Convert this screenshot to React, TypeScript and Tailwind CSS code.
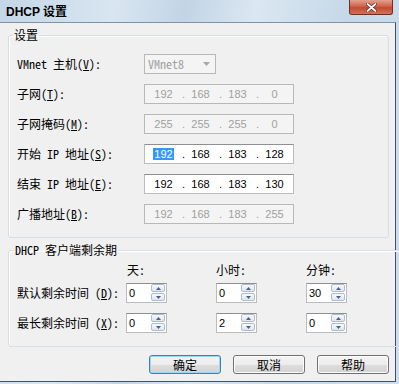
import React from 'react';

type IpProps = { parts: string[]; disabled?: boolean; selectFirst?: boolean };

function IpBox({ parts, disabled, selectFirst }: IpProps) {
  return (
    <div
      className={`flex h-[20px] w-[150px] items-center border font-['Liberation_Sans',sans-serif] text-[11px] leading-[14px] ${
        disabled
          ? 'border-[#b8b8b8] bg-[#f4f4f4] text-[#a0a0a0]'
          : 'border-[#b9bdc2] border-t-[#8e8f94] bg-white text-black'
      }`}
    >
      {parts.map((p, i) => (
        <div key={i} className="grid w-[37px] grid-cols-[5px_1fr_5px] items-center">
          <span className="text-left">{i > 0 ? '.' : ''}</span>
          <span className="text-center">
            {selectFirst && i === 0 ? (
              <span className="bg-[#3399ff] px-[1px] text-white">{p}</span>
            ) : (
              p
            )}
          </span>
          <span />
        </div>
      ))}
    </div>
  );
}

function Combo() {
  return (
    <div className="flex h-[20px] w-[72px] items-center border border-[#b8b8b8] bg-[#f4f4f4]">
      <span className="flex-1 pl-[3px] text-[12px] leading-[14px] text-[#a0a0a0]">VMnet8</span>
      <div className="flex h-full w-[17px] items-center justify-center">
        <svg width="7" height="4" viewBox="0 0 7 4">
          <path d="M0 0h7L3.5 4z" fill="#a8a8a8" />
        </svg>
      </div>
    </div>
  );
}

function SpinBtn({ up }: { up?: boolean }) {
  return (
    <div className="flex h-[8px] w-[14px] items-center justify-center rounded-[2px] border border-[#aebccc] bg-[linear-gradient(#f7f9fb,#dfe6ee)]">
      <svg width="5" height="3" viewBox="0 0 5 3">
        <path d={up ? 'M0 3h5L2.5 0z' : 'M0 0h5L2.5 3z'} fill="#4a6186" />
      </svg>
    </div>
  );
}

function Spin({ value }: { value: string }) {
  return (
    <div className="flex h-[20px] w-[41px] items-start border border-[#b9bdc2] border-t-[#8e8f94] bg-white">
      <span className="flex-1 self-center pl-[2px] font-['Liberation_Sans',sans-serif] text-[11px] leading-[14px]">
        {value}
      </span>
      <div className="mr-[1px] flex flex-col gap-[1px]">
        <SpinBtn up />
        <SpinBtn />
      </div>
    </div>
  );
}

function Key({ k }: { k: string }) {
  return (
    <>
      (<span className="underline underline-offset-1">{k}</span>):
    </>
  );
}

const ipRows = [
  { label: <>子网<Key k="T" /></>, parts: ['192', '168', '183', '0'], disabled: true },
  { label: <>子网掩码<Key k="M" /></>, parts: ['255', '255', '255', '0'], disabled: true },
  { label: <>开始 IP 地址<Key k="S" /></>, parts: ['192', '168', '183', '128'], selectFirst: true },
  { label: <>结束 IP 地址<Key k="E" /></>, parts: ['192', '168', '183', '130'] },
  { label: <>广播地址<Key k="B" /></>, parts: ['192', '168', '183', '255'], disabled: true },
];

const leaseRows = [
  { label: <>默认剩余时间 <Key k="D" /></>, values: ['0', '0', '30'] },
  { label: <>最长剩余时间 <Key k="X" /></>, values: ['0', '2', '0'] },
];

export default function App() {
  return (
    <div className="h-[384px] w-[399px] overflow-hidden bg-[linear-gradient(100deg,#c4d6e7_0%,#d9e6f1_25%,#c2d4e5_40%,#dbe7f1_55%,#c6d8e8_75%,#cfdeec_100%)] font-['Noto_Sans_Mono_CJK_SC','Liberation_Mono','Noto_Sans_CJK_SC',monospace] text-[12px] text-black">
      {/* title bar */}
      <div className="flex h-[22px] items-start justify-between pr-[6px]">
        <span className="pl-[6px] pt-[4px] font-['Liberation_Sans','Noto_Sans_CJK_SC',sans-serif] text-[12px] leading-[16px] font-bold">
          DHCP 设置
        </span>
        <div className="flex h-[15px] w-[44px] items-center justify-center rounded-b-[3px] border border-t-0 border-[#6f3024] bg-[linear-gradient(#e3a08f,#d0634a_45%,#c24a30_55%,#d2735a)]">
          <svg width="11" height="9" viewBox="0 0 11 9">
            <path d="M1.5 1l8 7M9.5 1l-8 7" stroke="#5a2418" strokeWidth="3.2" strokeLinecap="round" />
            <path d="M1.5 1l8 7M9.5 1l-8 7" stroke="#ffffff" strokeWidth="1.8" strokeLinecap="round" />
          </svg>
        </div>
      </div>

      {/* client area */}
      <div className="flex h-[360px] w-[396px] flex-col border-t border-r border-b border-t-[#7f93a8] border-r-[#3f5368] border-b-[#3f5368] bg-[#f0f0f0]">
        <fieldset className="mt-[4px] ml-[8px] w-[381px] rounded-[3px] border border-[#d5dfe5] px-[8px] pt-[11px] pb-[13px] shadow-[inset_1px_1px_0_#ffffff]">
          <legend className="-ml-[4px] px-[1px] leading-[16px]">设置</legend>
          <div className="flex flex-col gap-[10px]">
            <div className="flex items-center">
              <span className="w-[127px] leading-[16px]">
                VMnet 主机<Key k="V" />
              </span>
              <Combo />
            </div>
            {ipRows.map((r, i) => (
              <div key={i} className="flex items-center">
                <span className="w-[127px] leading-[16px]">{r.label}</span>
                <IpBox parts={r.parts} disabled={r.disabled} selectFirst={r.selectFirst} />
              </div>
            ))}
          </div>
        </fieldset>

        <fieldset className="mt-[4px] ml-[8px] w-[381px] rounded-[3px] border border-[#d5dfe5] px-[8px] pt-[4px] pb-[13px] shadow-[inset_1px_1px_0_#ffffff]">
          <legend className="-ml-[3px] px-[1px] leading-[16px]">DHCP 客户端剩余期</legend>
          <div className="grid grid-cols-[109px_90px_90px_90px] leading-[16px]">
            <span />
            <span className="pl-[1px]">天:</span>
            <span>小时:</span>
            <span>分钟:</span>
          </div>
          <div className="mt-[5px] flex flex-col gap-[10px]">
            {leaseRows.map((r, i) => (
              <div key={i} className="grid grid-cols-[109px_90px_90px_90px] items-center">
                <span className="leading-[16px]">{r.label}</span>
                {r.values.map((v, j) => (
                  <Spin key={j} value={v} />
                ))}
              </div>
            ))}
          </div>
        </fieldset>

        <div className="mt-[8px] flex justify-end gap-[12px] pr-[6px] font-['Noto_Sans_CJK_SC',sans-serif]">
          <button className="h-[19px] w-[72px] rounded-[3px] border border-[#3c7fb1] bg-[linear-gradient(#f4f4f4,#ececec_50%,#dedede_50%,#d3d3d3)] text-[12px] leading-[16px] shadow-[inset_0_0_0_1px_#9fd8f5]">
            确定
          </button>
          <button className="h-[19px] w-[72px] rounded-[3px] border border-[#707070] bg-[linear-gradient(#f4f4f4,#ececec_50%,#dedede_50%,#d3d3d3)] text-[12px] leading-[16px] shadow-[inset_0_0_0_1px_#fcfcfc]">
            取消
          </button>
          <button className="h-[19px] w-[72px] rounded-[3px] border border-[#707070] bg-[linear-gradient(#f4f4f4,#ececec_50%,#dedede_50%,#d3d3d3)] text-[12px] leading-[16px] shadow-[inset_0_0_0_1px_#fcfcfc]">
            帮助
          </button>
        </div>
      </div>
    </div>
  );
}
